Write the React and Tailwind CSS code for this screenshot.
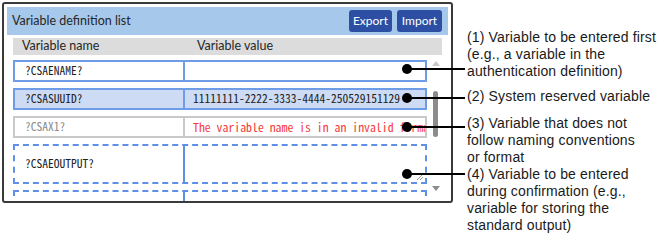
import React from 'react';

const rows = [
  { name: '?CSAENAME?', value: '', kind: 'first' },
  { name: '?CSASUUID?', value: '11111111-2222-3333-4444-250529151129', kind: 'system' },
  { name: '?CSAX1?', value: 'The variable name is in an invalid format', kind: 'invalid' },
  { name: '?CSAEOUTPUT?', value: '', kind: 'confirm' },
  { name: '', value: '', kind: 'confirm' },
];

// callout dots: y centre of each line in the picture
const callouts = [69, 98, 127, 174];

const mono = "font-['Noto_Sans_Mono_CJK_JP','Noto_Sans_CJK_JP',monospace]";

function Row({ row, last }) {
  if (row.kind === 'confirm') {
    return (
      <div className="flex h-[40px] shrink-0 border-2 border-dashed border-[#5d90e6] bg-white">
        <div className={`w-[170px] shrink-0 border-r-2 border-[#5d90e6] pl-[10px] flex items-center text-[11.5px] text-[#222] ${mono}`}>
          {row.name}
        </div>
        <div className="relative flex-1">
          {!last && (
            <svg className="absolute right-[1px] bottom-[1px]" width="8" height="8" viewBox="0 0 8 8">
              <path d="M7 1 L1 7 M7 4 L4 7" stroke="#9a9a9a" strokeWidth="1" />
            </svg>
          )}
        </div>
      </div>
    );
  }
  const box =
    row.kind === 'invalid'
      ? 'border-[#c9c9c9] bg-white'
      : row.kind === 'system'
      ? 'border-[#6e9ce6] bg-[#cddbf5]'
      : 'border-[#6e9ce6] bg-white';
  const divider = row.kind === 'invalid' ? 'border-[#c9c9c9]' : 'border-[#6e9ce6]';
  return (
    <div className={`flex h-[22px] shrink-0 border-2 ${box} ${mono}`}>
      <div
        className={`w-[170px] shrink-0 border-r-2 ${divider} pl-[10px] flex items-center text-[11.5px] ${
          row.kind === 'invalid' ? 'text-[#8a8a8a]' : 'text-[#222]'
        }`}
      >
        {row.name}
      </div>
      <div className="flex-1 min-w-0 overflow-hidden whitespace-nowrap pl-[8px] flex items-center">
        {row.kind === 'invalid' ? (
          <span className="text-[11.8px] text-[#f43c3c]">{row.value}</span>
        ) : (
          <span className="text-[11.5px] text-[#222]">{row.value}</span>
        )}
      </div>
    </div>
  );
}

export default function App() {
  return (
    <div className="relative w-[670px] h-[244px] bg-white overflow-hidden flex items-start font-['Lato',sans-serif]">
      {/* Variable definition list panel */}
      <div className="ml-[2px] mt-[2px] w-[451px] h-[201px] shrink-0 border-2 border-[#3a3a3a] rounded-[3px] p-[3px] overflow-hidden flex flex-col">
        <div className="h-[28px] shrink-0 bg-[#a6c8ea] flex items-center justify-between pl-[5px] pr-[6px]">
          <span className="text-[12.5px] text-[#262626]">Variable definition list</span>
          <div className="flex gap-[5px]">
            <button className="h-[22px] w-[43px] rounded-[3px] bg-[#2c4fa3] text-white text-[12px]">Export</button>
            <button className="h-[22px] w-[45px] rounded-[3px] bg-[#2c4fa3] text-white text-[12px]">Import</button>
          </div>
        </div>
        <div className="px-[6px] mt-[3px] flex flex-col flex-1 min-h-0">
          <div className="h-[17px] shrink-0 bg-[#dcdcdc] flex items-center text-[12.5px] text-[#262626]">
            <span className="w-[184px] pl-[9px]">Variable name</span>
            <span>Variable value</span>
          </div>
          <div className="flex flex-1 min-h-0">
            <div className="w-[414px] shrink-0 flex flex-col gap-[6px] pt-[5px]">
              {rows.map((r, i) => (
                <Row key={i} row={r} last={i === rows.length - 1} />
              ))}
            </div>
            <div className="relative ml-[3px] w-[11px] shrink-0">
              <div className="absolute left-[2px] top-[6px] w-0 h-0 border-l-[4px] border-r-[4px] border-b-[5px] border-l-transparent border-r-transparent border-b-[#c8c8c8]" />
              <div className="absolute left-[3px] top-[36px] w-[5px] h-[46px] rounded-full bg-[#8c8c8c]" />
              <div className="absolute left-[2px] top-[131px] w-0 h-0 border-l-[4px] border-r-[4px] border-t-[5px] border-l-transparent border-r-transparent border-t-[#8c8c8c]" />
            </div>
          </div>
        </div>
      </div>

      {/* Annotations */}
      <div className="ml-[14px] pt-[29px] text-[14px] tracking-[0.15px] leading-[17px] text-[#1a1a1a] font-['Liberation_Sans',Arial,sans-serif]">
        <div>
          (1) Variable to be entered first
          <br />
          (e.g., a variable in the
          <br />
          authentication definition)
        </div>
        <div className="mt-[8px]">(2) System reserved variable</div>
        <div className="mt-[10px]">
          (3) Variable that does not
          <br />
          follow naming conventions
          <br />
          or format
        </div>
        <div>
          (4) Variable to be entered
          <br />
          during confirmation (e.g.,
          <br />
          variable for storing the
          <br />
          standard output)
        </div>
      </div>

      {/* Callout dots and leader lines */}
      {callouts.map((y) => (
        <React.Fragment key={y}>
          <div className="absolute left-[402px] w-[10px] h-[10px] rounded-full bg-black" style={{ top: y - 5 }} />
          <div className="absolute left-[407px] w-[58px] h-[2px] bg-black" style={{ top: y - 1 }} />
        </React.Fragment>
      ))}
    </div>
  );
}
